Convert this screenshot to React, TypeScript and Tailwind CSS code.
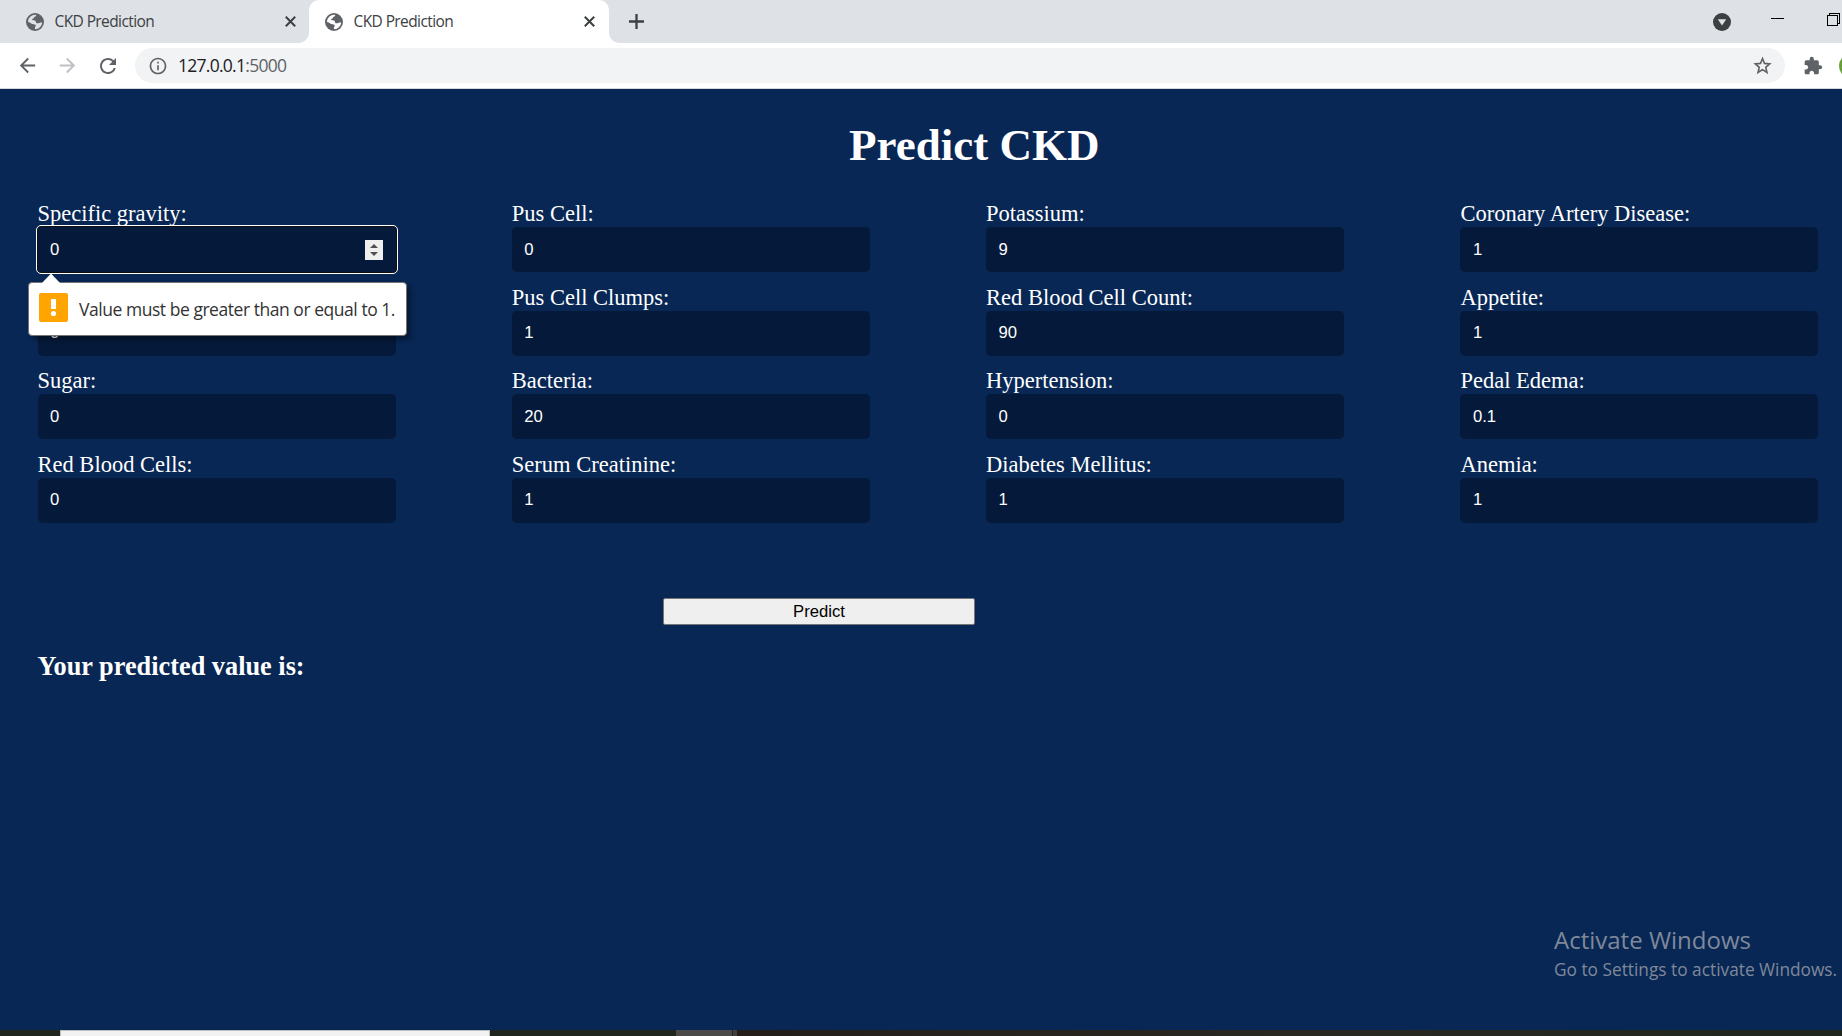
import React from "react";
import { MdArrowBack, MdArrowForward, MdRefresh, MdInfoOutline, MdExtension } from "react-icons/md";

type Field = { label: string; value: string };

const columns: Field[][] = [
  [
    { label: "Specific gravity:", value: "0" },
    { label: "", value: "0" },
    { label: "Sugar:", value: "0" },
    { label: "Red Blood Cells:", value: "0" },
  ],
  [
    { label: "Pus Cell:", value: "0" },
    { label: "Pus Cell Clumps:", value: "1" },
    { label: "Bacteria:", value: "20" },
    { label: "Serum Creatinine:", value: "1" },
  ],
  [
    { label: "Potassium:", value: "9" },
    { label: "Red Blood Cell Count:", value: "90" },
    { label: "Hypertension:", value: "0" },
    { label: "Diabetes Mellitus:", value: "1" },
  ],
  [
    { label: "Coronary Artery Disease:", value: "1" },
    { label: "Appetite:", value: "1" },
    { label: "Pedal Edema:", value: "0.1" },
    { label: "Anemia:", value: "1" },
  ],
];

function Globe({ land }: { land: string }) {
  return (
    <svg className="size-[18px] shrink-0" viewBox="0 0 18 18">
      <circle cx="9" cy="9" r="9" fill="#5f6368" />
      <path
        d="M10.3 1.9c-.2 1.1-.8 1.7-1.9 1.8-.4 1.5-1 2-2.2 2.1-.2 1.2.4 1.5 1.6 1.5 1.7.1 2 .8 2.2 2.1.6.9 1.5 1.1 2.6.9.9-.5 1.6-.9 3.6-.8A7.2 7.2 0 0 1 9.2 16.2c-.5-.6-.2-1.5-.2-2.1 1.1-.6 1-1.8.2-2.3-1-.6-2.2-.5-3.300-.9C4.500 9.900 3.600 9.100 1.900 9A7.200 7.200 0 0 1 10.300 1.900z"
        fill={land}
      />
    </svg>
  );
}

function Tab({ active }: { active?: boolean }) {
  return (
    <div
      className={
        active
          ? "relative flex h-[43px] w-[300px] items-center rounded-t-[10px] bg-white pl-[16px] pr-[11px] text-[#3c4043]"
          : "flex h-[43px] w-[309px] items-center pl-[26px] pr-[10px] text-[#3c4043]"
      }
    >
      {active && (
        <>
          <span className="absolute bottom-0 -left-[10px] size-[10px] bg-[radial-gradient(circle_at_0_0,transparent_9.5px,white_10px)]" />
          <span className="absolute bottom-0 -right-[10px] size-[10px] bg-[radial-gradient(circle_at_100%_0,transparent_9.5px,white_10px)]" />
        </>
      )}
      <Globe land={active ? "#ffffff" : "#dee1e6"} />
      <span className="mb-[2px] ml-[10.5px] whitespace-nowrap text-[15.5px] leading-5 tracking-[-0.6px]">CKD Prediction</span>
      <svg className="ml-auto mr-[3px] size-[11px]" viewBox="0 0 11 11" stroke="#3c4043" strokeWidth="2">
        <path d="M.8.8l9.4 9.4M10.2.8L.8 10.2" />
      </svg>
    </div>
  );
}

function Browser() {
  return (
    <header className="font-['Open_Sans',sans-serif]">
      <div className="flex h-[43px] bg-[#dee1e6]">
        <Tab />
        <Tab active />
        <div className="flex flex-1 items-center pl-[16px] text-[#3c4043]">
          <svg className="ml-[4px] size-[15px]" viewBox="0 0 15 15" stroke="#3c4043" strokeWidth="2.3">
            <path d="M7.5 0v15M0 7.5h15" />
          </svg>
          <svg className="ml-auto mr-[40px] size-[18px]" viewBox="0 0 18 18">
            <circle cx="9" cy="9" r="9" fill="#3c4043" />
            <path d="M4.8 6.2h8.4L9 12.6z" fill="#dee1e6" />
          </svg>
          <span className="mb-[6px] h-px w-[13px] bg-black" />
          <svg className="ml-[43px] mr-[2px] mb-[5px] size-[13px] shrink-0" viewBox="0 0 13 13" fill="none" stroke="black" shapeRendering="crispEdges">
            <path d="M.5 2.5h10v10H.5zM2.5 2.5v-2h10v10h-2" />
          </svg>
        </div>
      </div>
      <div className="flex h-[46px] items-center overflow-hidden border-b border-[#d5d7da] bg-white text-[#5f6368]">
        <MdArrowBack className="ml-[16px] size-[23px] shrink-0" />
        <MdArrowForward className="ml-[17px] size-[23px] shrink-0 text-[#bdbfc2]" />
        <MdRefresh className="ml-[17px] size-[24px] shrink-0" />
        <div className="ml-[15px] flex h-[35px] w-[1650px] shrink-0 items-center rounded-full bg-[#f1f3f4] pl-[12px] pr-[13px]">
          <MdInfoOutline className="ml-px size-[20px]" />
          <span className="mb-[2px] ml-[10px] text-[17.5px] leading-6 tracking-[-0.73px]">
            <span className="text-[#202124]">127.0.0.1</span>:5000
          </span>
          <svg className="ml-auto size-[19px]" viewBox="0 0 20 20" fill="none" stroke="#5f6368" strokeWidth="1.7">
            <path d="M10 2.7l2.100 5.100 5.500.5-4.200 3.600 1.300 5.400L10 14.400l-4.700 2.900 1.300-5.400L2.400 8.300l5.500-.5z" />
          </svg>
        </div>
        <MdExtension className="ml-[18px] size-[20px] shrink-0" />
        <span className="ml-[16px] size-[26px] shrink-0 rounded-full bg-[#689f38]" />
      </div>
    </header>
  );
}

function ValidationBubble() {
  return (
    <div className="absolute -left-[9.5px] top-[55px] z-10 flex h-[54px] w-[379px] items-center rounded-[4px] border border-[#77736e] bg-white pl-[10px] font-['Open_Sans',sans-serif] shadow-[4px_4px_5px_rgba(0,0,0,0.35)]">
      <svg className="absolute -top-[10px] left-[12px] h-[11px] w-[20px]" viewBox="0 0 20 11">
        <path d="M0 11 10 .5 20 11z" fill="white" />
      </svg>
      <svg className="mb-[3px] size-[29px] shrink-0" viewBox="0 0 29 29">
        <rect width="29" height="29" rx="2" fill="#ffa400" />
        <path d="M12 6h5v10h-5z" fill="white" />
        <circle cx="14.5" cy="20.5" r="2.6" fill="white" />
      </svg>
      <span className="ml-[11px] whitespace-nowrap text-[17.5px] leading-6 tracking-[-0.46px] text-[#333]">
        Value must be greater than or equal to 1.
      </span>
    </div>
  );
}

function FormField({ field, focused }: { field: Field; focused: boolean }) {
  return (
    <div className="h-[83.6px]">
      <div className="h-[26px] whitespace-nowrap text-[22.5px] leading-[26px]">{field.label}</div>
      <div
        className={
          focused
            ? "relative flex h-[45px] items-center rounded-[3px] bg-[#051a3a] px-[12px] outline-1 outline-offset-1 outline-white ring-1 ring-[#101010]"
            : "relative flex h-[45px] items-center rounded-[5px] bg-[#051a3a] px-[12px]"
        }
      >
        <span className="ml-[0.5px] font-['Liberation_Sans',sans-serif] text-[16.67px] leading-5">{field.value}</span>
        {focused && (
          <>
            <svg className="ml-auto mr-[0.5px] h-[20px] w-[18px]" viewBox="0 0 18 20">
              <path d="M0 0h18v20H0z" fill="#efefef" />
              <path d="M5 8 9 4l4 4zM5 12l4 4 4-4z" fill="#505050" />
            </svg>
            <ValidationBubble />
          </>
        )}
      </div>
    </div>
  );
}

export default function App() {
  return (
    <div className="flex h-[1036px] w-[1842px] flex-col overflow-hidden bg-[#082755]">
      <Browser />
      <main className="relative flex-1 pl-[37.5px] font-['Liberation_Serif',serif] text-white">
        <h1 className="pt-[30px] pl-[69px] text-center text-[45px] leading-[52px] font-bold">Predict CKD</h1>
        <div className="mt-[30px] flex gap-[116.3px]">
          {columns.map((fields, c) => (
            <div key={c} className="w-[358px] shrink-0">
              {fields.map((field, r) => (
                <FormField key={r} field={field} focused={c === 0 && r === 0} />
              ))}
            </div>
          ))}
        </div>
        <button className="mt-[62.4px] ml-[625.5px] flex h-[27px] w-[312px] items-center justify-center rounded-[2px] border border-[#767676] bg-[#efefef] pt-px font-['Liberation_Sans',sans-serif] text-[16.67px] leading-5 text-black">
          Predict
        </button>
        <h3 className="mt-[27.4px] text-[26.3px] leading-[30px] font-bold">Your predicted value is:</h3>
        <div className="absolute top-[835px] left-[1554px] whitespace-nowrap font-['Open_Sans',sans-serif] text-[#7f899a]">
          <div className="text-[24px] leading-[32px]">Activate Windows</div>
          <div className="text-[17.3px] leading-[27px]">Go to Settings to activate Windows.</div>
        </div>
      </main>
      <footer className="flex h-[6px] shrink-0 bg-[#1f261e]">
        <div className="ml-[60px] h-[6px] w-[430px] border border-b-0 border-[#bdbdbd] bg-[#f2f2f2]" />
        <div className="ml-[186px] w-[56px] bg-[#4b4a49]" />
        <div className="ml-px w-[4px] bg-[#42403e]" />
        <div className="flex-1 bg-linear-to-r from-[#241d1a] via-[#292821] to-[#1f261e]" />
      </footer>
    </div>
  );
}
